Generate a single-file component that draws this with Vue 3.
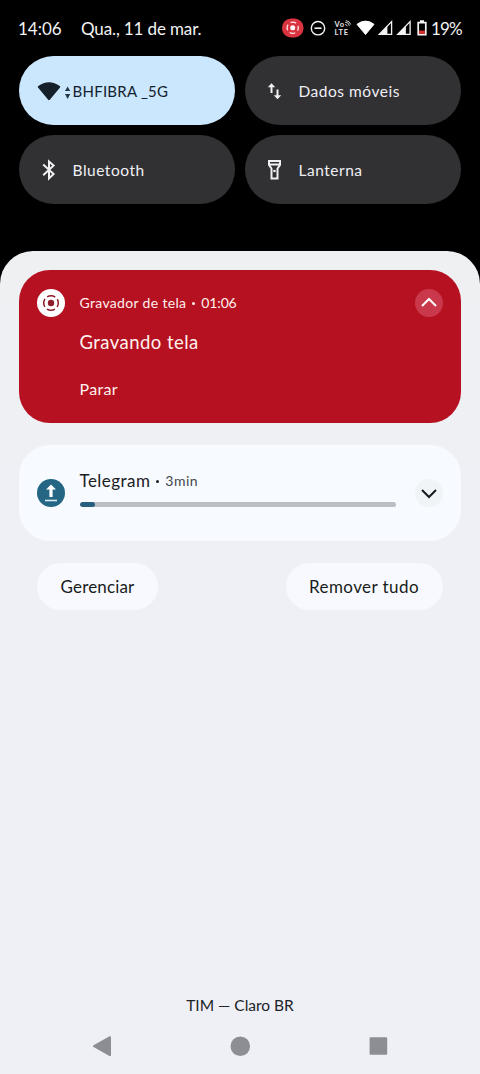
<script setup>
const progress = 5
</script>

<template>
  <div class="screen">
    <header class="status">
      <span class="t clock">14:06</span>
      <span class="t date">Qua., 11 de mar.</span>
      <svg class="status-icons" width="148" height="24" viewBox="0 0 148 24">
        <rect x="0" y="2.5" width="21.5" height="19" rx="9" fill="#d9343f" />
        <g fill="none" stroke="#ffe9e9" stroke-width="1.3">
          <circle cx="10.7" cy="11.8" r="5.6" stroke-dasharray="5.8 3" stroke-dashoffset="2.9" />
          <circle cx="10.7" cy="11.8" r="2.5" fill="#fff" stroke="none" />
        </g>
        <circle cx="36" cy="12.2" r="6.7" fill="none" stroke="#f4f4f4" stroke-width="1.4" />
        <path d="M32.5 12.2h7" stroke="#f4f4f4" stroke-width="1.6" />
        <text class="volte" x="52.5" y="10.8" textLength="9.5">Vo</text>
        <path d="M63 6.1q4 0 4.5 4M63.2 8.5q1.7 0 2 1.8M63.8 4.6q4 .4 5 4" fill="none" stroke="#ddd" stroke-width=".9" />
        <text class="volte" x="52.5" y="18.9" textLength="13.5">LTE</text>
        <path d="M75 8.3Q83.5 1.9 92 8.3L83.5 18.5Z" fill="#fff" stroke="#fff" stroke-linejoin="round" />
        <g v-for="x in [96, 114.5]" :key="x" :transform="`translate(${x} 0)`">
          <path d="M1.2 18.4L13.6 5.6V18.4Z" fill="none" stroke="#f4f4f4" stroke-width="1.3" />
          <path d="M1 18.8L9.4 9.8V18.8Z" fill="#f4f4f4" />
        </g>
        <path d="M136.2 6.6h7.6v12h-7.6zM138 5h4" fill="none" stroke="#f6f6f6" stroke-width="1.7" />
        <path d="M137 14.6h6v3.2H137z" fill="#d9302d" />
      </svg>
      <span class="t percent">19%</span>
    </header>

    <section class="tiles">
      <button class="tile active">
        <svg width="36" height="24" viewBox="0 0 36 24">
          <path d="M1 7.2Q12 -.8 23 7.2Q23.5 7.8 23 8.4L12.8 20.7Q12 21.6 11.2 20.7L1 8.4Q.5 7.8 1 7.2Z" fill="#15202a" />
          <path d="M28 12.1l2.6-4.6 2.6 4.6zM28 15.1l2.6 5 2.6-5z" fill="#263744" />
        </svg>
        <span class="t wifi">BHFIBRA _5G</span>
      </button>
      <button class="tile">
        <svg width="36" height="24" viewBox="0 0 36 24">
          <path d="M8.5 14V6M14.5 10.5v8" fill="none" stroke="#f0eff2" stroke-width="2" />
          <path d="M4.8 8.2l3.7-4 3.7 4zM10.8 16.2l3.7 4 3.7-4z" fill="#f0eff2" />
        </svg>
        <span class="t data">Dados móveis</span>
      </button>
      <button class="tile">
        <svg width="36" height="24" viewBox="0 0 36 24">
          <path d="M6.2 6.4l10.4 9.6-4.6 4.4V3.4l4.6 4.2-10.4 9.6" fill="none" stroke="#f0eff2" stroke-width="2" />
        </svg>
        <span class="t bluetooth">Bluetooth</span>
      </button>
      <button class="tile">
        <svg width="36" height="24" viewBox="0 0 36 24">
          <path d="M6 3h11v4l-2.5 3.5v10h-6v-10L6 7zM6 6.6h11" fill="none" stroke="#f0eff2" stroke-width="2" />
          <circle cx="11.5" cy="13" r="1.3" fill="#f0eff2" />
        </svg>
        <span class="t torch">Lanterna</span>
      </button>
    </section>

    <main class="shade">
      <article class="recorder">
        <svg width="28" height="28" viewBox="0 0 28 28">
          <circle cx="14" cy="14" r="14" fill="#fff" />
          <circle cx="14" cy="14" r="3.2" fill="#8d1d28" />
          <circle cx="14" cy="14" r="7.3" fill="none" stroke="#8d1d28" stroke-width="1.5" stroke-dasharray="8.47 3" stroke-dashoffset="4.23" />
        </svg>
        <div class="recorder-body">
          <div class="recorder-head">
            <span class="t app">Gravador de tela</span><i class="dot"></i><span class="t elapsed">01:06</span>
          </div>
          <div class="t title">Gravando tela</div>
          <div class="t stop">Parar</div>
        </div>
        <svg width="28" height="28" viewBox="0 0 28 28">
          <circle cx="14" cy="14" r="14" fill="#c9394b" />
          <path d="M7 17l7-7 7 7" fill="none" stroke="#fff" stroke-width="2" />
        </svg>
      </article>

      <article class="upload">
        <svg width="28" height="28" viewBox="0 0 28 28">
          <circle cx="14" cy="14" r="14" fill="#246683" />
          <path d="M14 5.5l5 5h-3.4V18h-3.2v-7.5H9z" fill="#fff" />
          <path d="M8 21.5h12" stroke="#d8edf5" stroke-width="1.6" />
        </svg>
        <div class="upload-body">
          <div class="upload-head">
            <span class="t telegram">Telegram</span><i class="dot"></i><span class="t age">3min</span>
          </div>
          <div class="track"><div class="fill" :style="{ width: progress + '%' }"></div></div>
        </div>
        <svg width="28" height="28" viewBox="0 0 28 28">
          <circle cx="14" cy="14" r="14" fill="#f1f4f6" />
          <path d="M7 11l7 7 7-7" fill="none" stroke="#171c20" stroke-width="2" />
        </svg>
      </article>

      <div class="actions">
        <button class="pill manage"><span class="t">Gerenciar</span></button>
        <button class="pill clear"><span class="t">Remover tudo</span></button>
      </div>

      <footer>
        <div class="carrier"><span class="t">TIM — Claro BR</span></div>
        <svg class="nav" width="480" height="28" viewBox="0 0 480 28">
          <g fill="#8d8e94" stroke="#8d8e94" stroke-width="2" stroke-linejoin="round">
            <path d="M94 14.2L110 5.2V23.2Z" />
            <circle cx="240.3" cy="14.2" r="8.8" />
            <rect x="370.6" y="6.2" width="15.6" height="15.6" />
          </g>
        </svg>
      </footer>
    </main>
  </div>
</template>

<style>
body { background: #000; }
</style>

<style scoped>
.screen {
  display: flex;
  flex-direction: column;
  width: 480px;
  height: 1074px;
  overflow: hidden;
  background: #000;
  font-family: Lato, "Noto Sans", sans-serif;
}
svg { display: block; flex: none; }
button { border: 0; margin: 0; font: inherit; }
.t { white-space: nowrap; }
.status {
  display: flex;
  flex: none;
  align-items: center;
  height: 56px;
  padding: 0 0 0 18px;
  box-sizing: border-box;
  color: #f3f3f3;
  font-size: 17px;
}
.clock { width: 63px; }
.date { width: 201px; letter-spacing: -.13px; }
.percent { padding-left: 1px; letter-spacing: -.8px; }
.status-icons { margin-top: -1px; }
.volte { font: 700 7.5px Lato, sans-serif; fill: #e7e7e7; }
.tiles {
  display: grid;
  grid-template-columns: 216.5px 216.5px;
  grid-auto-rows: 69px;
  gap: 10px 9.5px;
  padding: 0 0 0 18.5px;
  height: 194.5px;
  box-sizing: border-box;
  flex: none;
}
.tile {
  display: flex;
  align-items: center;
  padding: 0 0 0 18px;
  border-radius: 34.5px;
  background: #313134;
  color: #f0eff3;
  font-size: 15.5px;
  letter-spacing: .52px;
}
.tile.active { background: #cae7fe; color: #13212d; font-size: 15px; letter-spacing: .25px; }
.shade {
  flex: 1;
  display: flex;
  flex-direction: column;
  padding: 19px 19px 0 18.5px;
  border-radius: 33px 33px 0 0;
  background: linear-gradient(#eef0f2, #eff0f6 300px);
}
.recorder, .upload {
  display: flex;
  box-sizing: border-box;
  padding: 0 18.5px;
}
.recorder {
  height: 153px;
  padding-top: 19px;
  border-radius: 31px;
  background: #b61120;
  color: #fff0ee;
}
.recorder-body, .upload-body { flex: 1; margin: 0 18.5px 0 14.5px; }
.recorder-head { display: flex; align-items: center; height: 28px; font-size: 14px; }
.app { letter-spacing: .33px; }
.elapsed { letter-spacing: -.15px; }
.dot { width: 3px; height: 3px; border-radius: 50%; background: currentColor; margin: 2px 6px 0; }
.title { margin-top: 13px; font-size: 18.5px; line-height: 24px; letter-spacing: .45px; }
.stop { margin-top: 24px; font-size: 16px; line-height: 22px; letter-spacing: .3px; }
.upload {
  align-items: center;
  height: 96.5px;
  margin-top: 22px;
  border-radius: 31px;
  background: #f7fafe;
  color: #1c2024;
}
.upload-body { padding-bottom: 11px; }
.upload-head { display: flex; align-items: center; height: 24px; font-size: 17px; }
.telegram { letter-spacing: .45px; }
.age { font-size: 14px; color: #41474b; letter-spacing: .5px; }
.track { height: 5px; margin-top: 9.5px; border-radius: 3px; background: #bbbfc3; overflow: hidden; }
.fill { height: 100%; border-radius: 3px; background: #285f7e; }
.actions { display: flex; justify-content: space-between; margin-top: 22px; padding: 0 18.5px; }
.pill {
  height: 47px;
  padding: 0;
  border-radius: 24px;
  background: #f8f9fe;
  color: #181b20;
  font-size: 17px;
}
.manage { width: 121px; letter-spacing: .15px; }
.clear { width: 157px; letter-spacing: .42px; }
footer { margin: auto -19px 14px -18.5px; }
.carrier { margin-bottom: 17px; text-align: center; color: #202327; font-size: 15.5px; line-height: 20px; }
</style>
